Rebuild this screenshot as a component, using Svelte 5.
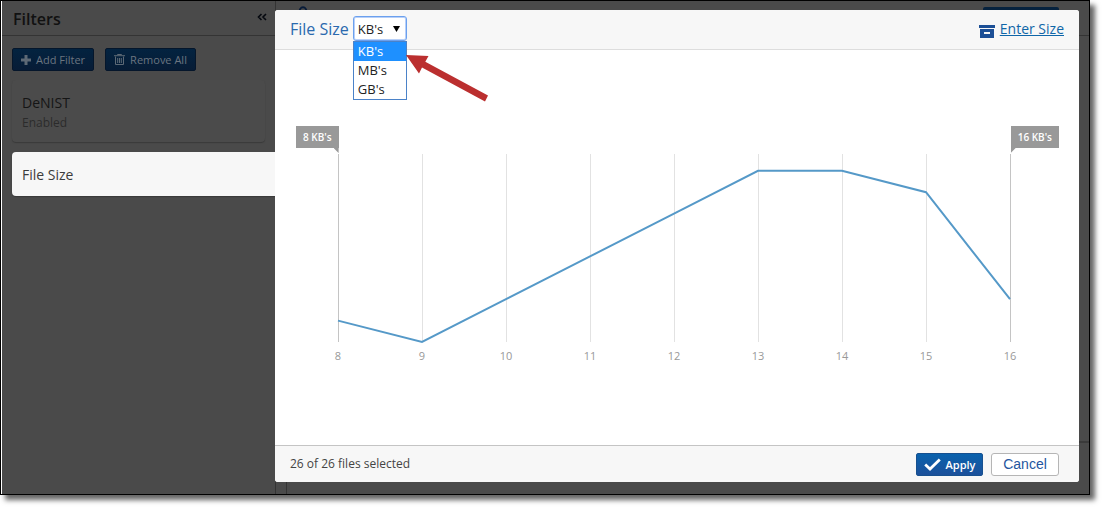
<script>
  const units = ["KB's", "MB's", "GB's"];
  let unit = $state("KB's");

  const sizes = [8, 9, 10, 11, 12, 13, 14, 15, 16];
  const counts = [1, 0, 2, 4, 6, 8, 8, 7, 2];
  const step = 84;
  const plotHeight = 188;
  const perFile = 21.4;
  const plotWidth = step * (sizes.length - 1);
  const points = counts
    .map((count, i) => `${i * step},${plotHeight - count * perFile}`)
    .join(' ');
</script>

<div class="page">
<div class="frame">
  <div class="backdrop" aria-hidden="true">
    <div class="rule-top"></div>
    <div class="rule-side"></div>
    <div class="panel-edge"></div>
    <svg class="peek-loop" width="12" height="10" viewBox="0 0 12 10">
      <path d="M2 10 C2 1 10 1 10 10" fill="none" stroke="#061a38" stroke-width="2" />
    </svg>
    <div class="peek-button"></div>
    <div class="right-rule"></div>
  </div>

  <aside>
    <header class="side-head">
      <h2>Filters</h2>
      <button class="collapse" aria-label="Collapse filters">
        <svg width="10" height="8" viewBox="0 0 10 8">
          <path d="M4.5 1 L1.5 4 L4.5 7 M9 1 L6 4 L9 7" fill="none" stroke="#05080f" stroke-width="1.6" />
        </svg>
      </button>
    </header>
    <div class="side-body">
      <div class="side-actions">
        <button class="dim-btn">
          <svg width="10" height="10" viewBox="0 0 10 10"><path d="M3.5 0h3v3.5H10v3H6.5V10h-3V6.5H0v-3h3.5z" fill="#5d6975" /></svg>
          Add Filter
        </button>
        <button class="dim-btn">
          <svg width="11" height="11" viewBox="0 0 11 11">
            <path d="M3.5 1.2V.5h4v.7M0 1.7h11M1.5 2.5v8h8v-8M3.7 4v5M5.5 4v5M7.3 4v5" fill="none" stroke="#5d6975" />
          </svg>
          Remove All
        </button>
      </div>
      <section class="card">
        <h3>DeNIST</h3>
        <p>Enabled</p>
      </section>
      <section class="card active">
        <h3>File Size</h3>
      </section>
    </div>
  </aside>

  <main>
    <header class="dialog-head">
      <label for="unit">File Size</label>
      <div class="picker">
        <select id="unit" bind:value={unit}>
          {#each units as name}
            <option value={name}>{name}</option>
          {/each}
        </select>
        <svg class="caret" width="7" height="6" viewBox="0 0 7 6"><path d="M0 0h7L3.5 6z" fill="#000" /></svg>
        <div class="menu" role="listbox" aria-label="Unit">
          {#each units as name}
            <button role="option" aria-selected={name === unit} class:chosen={name === unit} onclick={() => (unit = name)}>{name}</button>
          {/each}
        </div>
        <svg class="pointer" width="82" height="48" viewBox="0 0 82 48">
          <path d="M0 0 L22.5 1 L19.3 6.8 L82 40.5 L79 46.5 L16 12.5 L13 18.5 Z" fill="#bb2f2f" />
        </svg>
      </div>
      <a class="enter" href="#enter-size">
        <svg width="16" height="13" viewBox="0 0 16 13">
          <path d="M0 0h16v3H0z" fill="#1c4f96" />
          <path fill-rule="evenodd" d="M1 4h14v9H1zM5 7h6v2H5z" fill="#1c4f96" />
        </svg>
        <span>Enter Size</span>
      </a>
    </header>

    <div class="chart">
      <div class="flags">
        <span class="flag from">8 KB's</span>
        <span class="flag to">16 KB's</span>
      </div>
      <div class="plot">
        <svg viewBox="0 0 {plotWidth} {plotHeight}" preserveAspectRatio="none" role="img" aria-label="Files by size">
          {#each sizes as size, i}
            <line class:edge={i === 0 || i === sizes.length - 1} x1={i * step} x2={i * step} y1="0" y2={plotHeight} />
          {/each}
          <polyline {points} />
        </svg>
        <div class="axis">
          {#each sizes as size}
            <span>{size}</span>
          {/each}
        </div>
      </div>
    </div>

    <footer>
      <p>26 of 26 files selected</p>
      <button class="apply">
        <svg width="17" height="13" viewBox="0 0 17 13"><path d="M1.2 6.5 L6 11 L15.8 1.5" fill="none" stroke="#fff" stroke-width="2.8" /></svg>
        Apply
      </button>
      <button class="cancel">Cancel</button>
    </footer>
  </main>
</div>
</div>

<style>
  :global(body) {
    background: #fff;
  }
  * {
    box-sizing: border-box;
  }
  h2, h3, p {
    margin: 0;
    font-weight: 400;
  }
  button, select {
    font-family: inherit;
    margin: 0;
  }
  svg {
    display: block;
    flex: none;
  }
  .page {
    display: grid;
    min-height: 100vh;
    padding: 0 15px 15px 0;
    overflow: hidden;
    background: #fff;
  }
  .frame {
    position: relative;
    display: grid;
    grid-template-columns: 273px 1fr;
    border: 1px solid #000;
    background: #4a4a4a;
    box-shadow: inset 1px 0 #fff, 5px 5px 5px #666;
    padding-left: 1px;
    font-family: "Open Sans", sans-serif;
  }
  .backdrop {
    position: absolute;
    inset: 0 0 0 1px;
  }
  .backdrop > * {
    position: absolute;
  }
  .rule-top {
    top: 34px;
    left: 0;
    right: 0;
    height: 1px;
    background: #343434;
  }
  .rule-side {
    top: 0;
    bottom: 0;
    left: 273px;
    width: 1px;
    background: #343434;
  }
  .panel-edge {
    top: 34px;
    bottom: 0;
    left: 284px;
    width: 1px;
    background: #343434;
  }
  .peek-loop {
    left: 295px;
    top: 3px;
  }
  .peek-button {
    top: 6px;
    right: 30px;
    width: 76px;
    height: 20px;
    border-radius: 2px;
    background: #06223e;
  }
  .right-rule {
    right: 0;
    bottom: 51px;
    width: 12px;
    height: 2px;
    background: #3a3a3a;
  }
  aside {
    position: relative;
  }
  .side-head {
    display: flex;
    align-items: center;
    justify-content: space-between;
    height: 34px;
    padding: 2px 8px 0 11px;
  }
  h2 {
    font-size: 16px;
    font-weight: 600;
    line-height: 20px;
    color: #111;
  }
  .collapse {
    padding: 0 0 4px;
    border: 0;
    background: none;
  }
  .side-body {
    padding: 13px 0 0 10px;
  }
  .side-actions {
    display: flex;
    gap: 11px;
    margin-bottom: 9px;
  }
  .dim-btn {
    display: flex;
    align-items: center;
    gap: 5px;
    height: 23px;
    padding: 0 8px;
    border: 1px solid #05162b;
    border-radius: 2px;
    background: linear-gradient(#032340, #071c36);
    color: #6b7580;
    font-size: 11px;
    line-height: 15px;
  }
  .card {
    margin: 0 10px 10px 0;
    padding: 13px 10px 9px;
    border-radius: 4px;
    background: #4b4b4b;
    box-shadow: 0 1px 1px #3a3a3a;
  }
  .card h3 {
    color: #151515;
    font-size: 14px;
    line-height: 20px;
  }
  .card p {
    color: #2b2b2b;
    font-size: 12px;
    line-height: 20px;
  }
  .card.active {
    margin-right: 0;
    padding: 13px 10px 11px;
    border-radius: 4px 0 0 4px;
    background: #f7f7f7;
  }
  .card.active h3 {
    color: #3c3c3c;
  }
  main {
    position: relative;
    display: flex;
    flex-direction: column;
    margin: 9px 10px 12px 0;
    border-radius: 3px;
    background: #fff;
  }
  .dialog-head {
    display: flex;
    align-items: center;
    height: 40px;
    padding: 0 15px 2px;
    border-bottom: 1px solid #ddd;
    border-radius: 3px 3px 0 0;
    background: #f7f7f7;
  }
  label {
    color: #2a69ae;
    font-size: 16px;
    line-height: 20px;
  }
  .picker {
    position: relative;
    margin-left: 4px;
  }
  select {
    display: block;
    appearance: none;
    width: 54px;
    height: 25px;
    padding: 0 4px;
    border: 1px solid #6ba0ee;
    border-radius: 3px;
    outline: 0;
    box-shadow: inset 0 0 0 1px #b8d0f8;
    background: #fff;
    color: #222;
    font-size: 13px;
  }
  .caret {
    position: absolute;
    right: 7px;
    top: 10px;
    pointer-events: none;
  }
  .menu {
    position: absolute;
    z-index: 1;
    top: 25px;
    left: 0;
    width: 54px;
    border: 1px solid #4b82c8;
    background: #fff;
  }
  .menu button {
    display: block;
    width: 100%;
    height: 19px;
    padding: 0 4px;
    border: 0;
    background: #fff;
    color: #222;
    font-size: 13px;
    line-height: 19px;
    text-align: left;
  }
  .menu button.chosen {
    background: #1e90ff;
    color: #fff;
  }
  .pointer {
    position: absolute;
    top: 39px;
    left: 53px;
    z-index: 2;
  }
  .enter {
    display: flex;
    align-items: center;
    gap: 5px;
    margin-left: auto;
    color: #0f66a8;
    font-size: 14px;
    line-height: 20px;
  }
  .enter svg {
    margin-top: 5px;
  }
  .chart {
    flex: 1;
    padding-top: 76px;
  }
  .flags {
    display: flex;
    justify-content: space-between;
    padding: 0 20px 0 21px;
  }
  .flag {
    position: relative;
    padding: 0 7px;
    background: #999;
    color: #fff;
    font-size: 10px;
    font-weight: 600;
    line-height: 22px;
  }
  .flag::after {
    content: "";
    position: absolute;
    top: 22px;
    width: 5px;
    height: 5px;
    background: #999;
  }
  .from::after {
    right: 0;
    clip-path: polygon(0 0, 100% 0, 100% 100%);
  }
  .to::after {
    left: 0;
    clip-path: polygon(0 0, 100% 0, 0 100%);
  }
  .plot {
    padding: 6px 69px 0 63px;
  }
  .plot svg {
    width: 100%;
    height: 188px;
    overflow: visible;
  }
  line {
    stroke: #e2e2e2;
    stroke-width: 1px;
    shape-rendering: crispEdges;
    vector-effect: non-scaling-stroke;
  }
  line.edge {
    stroke: #c4c4c4;
  }
  polyline {
    fill: none;
    stroke: #5599c8;
    stroke-width: 2px;
    vector-effect: non-scaling-stroke;
  }
  .axis {
    display: flex;
    justify-content: space-between;
    padding-top: 6px;
    color: #999;
    font-size: 11px;
    line-height: 16px;
  }
  .axis span {
    display: flex;
    justify-content: center;
    width: 0;
  }
  footer {
    display: flex;
    align-items: center;
    gap: 8px;
    height: 37px;
    padding: 0 20px 0 15px;
    border-top: 1px solid #c4c4c4;
    border-radius: 0 0 3px 3px;
    background: #f7f7f7;
  }
  footer p {
    margin-right: auto;
    color: #444;
    font-size: 12px;
    line-height: 18px;
  }
  .apply, .cancel {
    display: flex;
    align-items: center;
    justify-content: center;
    width: 67px;
    height: 23px;
    padding: 0;
    border-radius: 2px;
  }
  .apply {
    gap: 5px;
    border: 1px solid #17508f;
    background: linear-gradient(#0a62ad, #1c509a);
    color: #fff;
    font-size: 11px;
    font-weight: 600;
  }
  .cancel {
    width: 68px;
    border: 1px solid #b5b5b5;
    border-radius: 3px;
    background: #fff;
    color: #2456a0;
    font-family: "Liberation Sans", sans-serif;
    font-size: 14px;
  }
</style>
